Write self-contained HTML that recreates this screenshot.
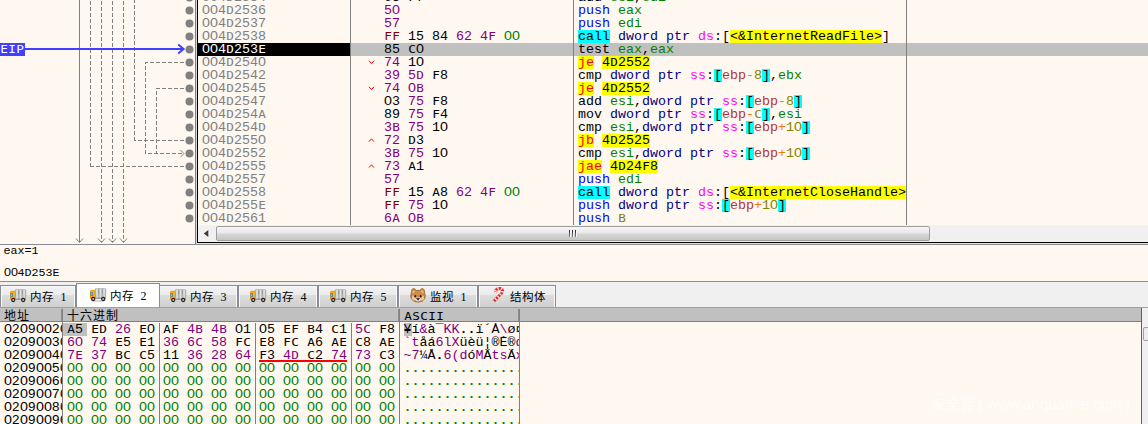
<!DOCTYPE html>
<html lang="zh-CN">
<head>
<meta charset="utf-8">
<title>x32dbg</title>
<style>
html,body{margin:0;padding:0;}
body{width:1148px;height:424px;overflow:hidden;background:#FFF8F0;position:relative;
 font-family:"Liberation Mono","Noto Sans CJK SC",monospace;font-size:13.333px;line-height:13px;color:#000;}
div,span,svg{position:absolute;box-sizing:border-box;}
.t span{position:static;}
.t{white-space:pre;height:13px;line-height:13px;overflow:hidden;}
.ad{left:198px;width:152px;padding-left:4px;color:#808080;}
.by{left:384px;width:189px;}
.in{left:574px;width:332px;padding-left:4px;}
.z{font-family:"Liberation Sans",sans-serif;font-style:normal;display:inline-block;width:8px;text-align:center;font-size:13px;line-height:0;text-indent:0;transform:scaleX(1.1);}
.z.y{width:7px;font-size:11.400px;}
.c{font-family:"DejaVu Sans Mono","Liberation Mono",monospace;font-style:normal;display:inline-block;width:8px;text-align:center;font-size:11px;line-height:0;text-indent:0;transform:scaleX(1.15);}
.k{color:#000}.p{color:#800080}.g{color:#008000}.r{color:#800000}
.b{color:#0000FF}.rg{color:#008300}.sz{color:#000080}.sg{color:#FF00FF}
.cy{background:#00FFFF;color:#000}.ye{background:#FFFF00;color:#000}.jr{background:#FFFF00;color:#FF0000}
.mb{color:#B03434}.op{color:#F27711}.vl{color:#828200}
.vln{width:1px;background:#808080;}
.hln{height:1px;}
.tabbg{border:1px solid #898C95;border-bottom:none;background:linear-gradient(#F2F2F2,#EBEBEB 45%,#DDDDDD 45%,#CFCFCF);box-shadow:inset 1px 1px 0 #FAFAFA,inset -1px 0 0 #FAFAFA;}
.tabtx{font-family:"Liberation Sans","Noto Sans CJK SC",sans-serif;font-size:11.500px;letter-spacing:0.500px;line-height:16px;height:16px;white-space:pre;color:#000;}
.tabtx i{position:static;font-style:normal;font-family:"Liberation Serif",serif;font-size:12px;word-spacing:3px;}
.hd{top:310px;height:13px;line-height:13px;white-space:pre;}
.hd.cj{top:309px;height:14px;line-height:16px;font-size:12px;letter-spacing:1px;}
.dr{white-space:pre;height:13px;line-height:13px;overflow:hidden;}
.dr span,.dr b{position:static;}
.sl{background:#C0C0C0;}
</style>
</head>
<body>

<svg style="left:0;top:0" width="196" height="245" viewBox="0 0 196 245" shape-rendering="crispEdges">
<g stroke="#808080" stroke-width="1" fill="none">
<path d="M79.5 0V242"/>
<g stroke-dasharray="4 2">
<path d="M90.5 166.5V0"/>
<path d="M184 166.5H90.5"/>
<path d="M101.5 1V242"/>
<path d="M112.5 1V242"/>
<path d="M123.5 1V242"/>
<path d="M134.5 140.5V0"/>
<path d="M184 140.5H134.5"/>
<path d="M184 62.5H145.5V153.5H183"/>
<path d="M184 88.5H156.5V153.5"/>
</g>
</g>
<g stroke="#808080" stroke-width="1" fill="none" shape-rendering="geometricPrecision">
<path d="M76.0 238.5L79.5 242.5L83.0 238.5"/>
<path d="M98.0 238.5L101.5 242.5L105.0 238.5"/>
<path d="M109.0 238.5L112.5 242.5L116.0 238.5"/>
<path d="M120.0 238.5L123.5 242.5L127.0 238.5"/>
<path d="M180.5 150.0L184 153.5L180.5 157.0"/>
</g>
<g fill="#808080" shape-rendering="geometricPrecision">
<circle cx="189.5" cy="-2.5" r="4"/>
<circle cx="189.5" cy="10.5" r="4"/>
<circle cx="189.5" cy="23.5" r="4"/>
<circle cx="189.5" cy="36.5" r="4"/>
<circle cx="189.5" cy="49.5" r="4"/>
<circle cx="189.5" cy="62.5" r="4"/>
<circle cx="189.5" cy="75.5" r="4"/>
<circle cx="189.5" cy="88.5" r="4"/>
<circle cx="189.5" cy="101.5" r="4"/>
<circle cx="189.5" cy="114.5" r="4"/>
<circle cx="189.5" cy="127.5" r="4"/>
<circle cx="189.5" cy="140.5" r="4"/>
<circle cx="189.5" cy="153.5" r="4"/>
<circle cx="189.5" cy="166.5" r="4"/>
<circle cx="189.5" cy="179.5" r="4"/>
<circle cx="189.5" cy="192.5" r="4"/>
<circle cx="189.5" cy="205.5" r="4"/>
<circle cx="189.5" cy="218.5" r="4"/>
</g>
<rect x="0" y="43" width="25" height="13" fill="#4040FF"/>
<rect x="25" y="48" width="158" height="2" fill="#4040FF"/>
<path d="M178.2 44.5L183.6 49.0L178.2 53.5" stroke="#4040FF" stroke-width="2" fill="none" shape-rendering="geometricPrecision"/>
</svg>
<div class="t" style="left:0;top:43px;color:#fff"><i class="c">E</i><i class="c">I</i><i class="c">P</i></div>
<div class="vln" style="left:195px;top:0;height:245px"></div>
<div class="vln" style="left:196px;top:0;height:244px;background:#D8D8D8"></div>
<div class="vln" style="left:197px;top:0;height:243px;background:#000"></div>
<div style="left:198px;top:43px;width:152px;height:13px;background:#000"></div>
<div style="left:351px;top:43px;width:797px;height:13px;background:#C0C0C0"></div>
<div class="t ad" style="top:-9px"><i class="z">0</i><i class="z">0</i>4<i class="c">D</i>2534</div>
<div class="t by" style="top:-9px"><span class="k"><i class="z">0</i>3</span> <span class="k"><i class="c">F</i>7</span></div>
<div class="t in" style="top:-9px"><span class="k">add</span> <span class="rg">esi</span><span class="k">,</span><span class="rg">edi</span></div>
<div class="t ad" style="top:4px"><i class="z">0</i><i class="z">0</i>4<i class="c">D</i>2536</div>
<div class="t by" style="top:4px"><span class="p">5<i class="z">0</i></span></div>
<div class="t in" style="top:4px"><span class="b">push</span> <span class="rg">eax</span></div>
<div class="t ad" style="top:17px"><i class="z">0</i><i class="z">0</i>4<i class="c">D</i>2537</div>
<div class="t by" style="top:17px"><span class="p">57</span></div>
<div class="t in" style="top:17px"><span class="b">push</span> <span class="rg">edi</span></div>
<div class="t ad" style="top:30px"><i class="z">0</i><i class="z">0</i>4<i class="c">D</i>2538</div>
<div class="t by" style="top:30px"><span class="r"><i class="c">F</i><i class="c">F</i></span> <span class="k">15</span> <span class="k">84</span> <span class="p">62</span> <span class="p">4<i class="c">F</i></span> <span class="g"><i class="z">0</i><i class="z">0</i></span></div>
<div class="t in" style="top:30px"><span class="cy">call</span> <span class="sz">dword ptr</span> <span class="sg">ds</span><span class="k">:[</span><span class="ye">&lt;&amp;InternetReadFile&gt;</span><span class="k">]</span></div>
<div class="t ad" style="top:43px;color:#fff"><i class="z">0</i><i class="z">0</i>4<i class="c">D</i>253<i class="c">E</i></div>
<div class="t by" style="top:43px"><span class="k">85</span> <span class="k"><i class="c">C</i><i class="z">0</i></span></div>
<div class="t in" style="top:43px"><span class="k">test</span> <span class="rg">eax</span><span class="k">,</span><span class="rg">eax</span></div>
<div class="t ad" style="top:56px"><i class="z">0</i><i class="z">0</i>4<i class="c">D</i>254<i class="z">0</i></div>
<div class="t by" style="top:56px"><span class="p">74</span> <span class="k">1<i class="z">0</i></span></div>
<svg style="left:0;top:0" width="400" height="226"><path d="M369 60.8L371.5 63.6L374 60.8" stroke="#FF0000" stroke-width="1" fill="none"/></svg>
<div class="t in" style="top:56px"><span class="jr">je</span> <span class="ye">4<i class="c">D</i>2552</span></div>
<div class="t ad" style="top:69px"><i class="z">0</i><i class="z">0</i>4<i class="c">D</i>2542</div>
<div class="t by" style="top:69px"><span class="p">39</span> <span class="p">5<i class="c">D</i></span> <span class="k"><i class="c">F</i>8</span></div>
<div class="t in" style="top:69px"><span class="k">cmp</span> <span class="sz">dword ptr</span> <span class="sg">ss</span><span class="k">:</span><span class="cy">[</span><span class="mb">ebp</span><span class="op">-</span><span class="vl">8</span><span class="cy">]</span><span class="k">,</span><span class="rg">ebx</span></div>
<div class="t ad" style="top:82px"><i class="z">0</i><i class="z">0</i>4<i class="c">D</i>2545</div>
<div class="t by" style="top:82px"><span class="p">74</span> <span class="p"><i class="z">0</i><i class="c">B</i></span></div>
<svg style="left:0;top:0" width="400" height="226"><path d="M369 86.8L371.5 89.6L374 86.8" stroke="#FF0000" stroke-width="1" fill="none"/></svg>
<div class="t in" style="top:82px"><span class="jr">je</span> <span class="ye">4<i class="c">D</i>2552</span></div>
<div class="t ad" style="top:95px"><i class="z">0</i><i class="z">0</i>4<i class="c">D</i>2547</div>
<div class="t by" style="top:95px"><span class="k"><i class="z">0</i>3</span> <span class="p">75</span> <span class="k"><i class="c">F</i>8</span></div>
<div class="t in" style="top:95px"><span class="k">add</span> <span class="rg">esi</span><span class="k">,</span><span class="sz">dword ptr</span> <span class="sg">ss</span><span class="k">:</span><span class="cy">[</span><span class="mb">ebp</span><span class="op">-</span><span class="vl">8</span><span class="cy">]</span></div>
<div class="t ad" style="top:108px"><i class="z">0</i><i class="z">0</i>4<i class="c">D</i>254<i class="c">A</i></div>
<div class="t by" style="top:108px"><span class="k">89</span> <span class="p">75</span> <span class="k"><i class="c">F</i>4</span></div>
<div class="t in" style="top:108px"><span class="k">mov</span> <span class="sz">dword ptr</span> <span class="sg">ss</span><span class="k">:</span><span class="cy">[</span><span class="mb">ebp</span><span class="op">-</span><span class="vl"><i class="c">C</i></span><span class="cy">]</span><span class="k">,</span><span class="rg">esi</span></div>
<div class="t ad" style="top:121px"><i class="z">0</i><i class="z">0</i>4<i class="c">D</i>254<i class="c">D</i></div>
<div class="t by" style="top:121px"><span class="p">3<i class="c">B</i></span> <span class="p">75</span> <span class="k">1<i class="z">0</i></span></div>
<div class="t in" style="top:121px"><span class="k">cmp</span> <span class="rg">esi</span><span class="k">,</span><span class="sz">dword ptr</span> <span class="sg">ss</span><span class="k">:</span><span class="cy">[</span><span class="mb">ebp</span><span class="op">+</span><span class="vl">1<i class="z">0</i></span><span class="cy">]</span></div>
<div class="t ad" style="top:134px"><i class="z">0</i><i class="z">0</i>4<i class="c">D</i>255<i class="z">0</i></div>
<div class="t by" style="top:134px"><span class="p">72</span> <span class="k"><i class="c">D</i>3</span></div>
<svg style="left:0;top:0" width="400" height="226"><path d="M369 141.6L371.5 138.8L374 141.6" stroke="#FF0000" stroke-width="1" fill="none"/></svg>
<div class="t in" style="top:134px"><span class="jr">jb</span> <span class="ye">4<i class="c">D</i>2525</span></div>
<div class="t ad" style="top:147px"><i class="z">0</i><i class="z">0</i>4<i class="c">D</i>2552</div>
<div class="t by" style="top:147px"><span class="p">3<i class="c">B</i></span> <span class="p">75</span> <span class="k">1<i class="z">0</i></span></div>
<div class="t in" style="top:147px"><span class="k">cmp</span> <span class="rg">esi</span><span class="k">,</span><span class="sz">dword ptr</span> <span class="sg">ss</span><span class="k">:</span><span class="cy">[</span><span class="mb">ebp</span><span class="op">+</span><span class="vl">1<i class="z">0</i></span><span class="cy">]</span></div>
<div class="t ad" style="top:160px"><i class="z">0</i><i class="z">0</i>4<i class="c">D</i>2555</div>
<div class="t by" style="top:160px"><span class="p">73</span> <span class="k"><i class="c">A</i>1</span></div>
<svg style="left:0;top:0" width="400" height="226"><path d="M369 167.6L371.5 164.8L374 167.6" stroke="#FF0000" stroke-width="1" fill="none"/></svg>
<div class="t in" style="top:160px"><span class="jr">jae</span> <span class="ye">4<i class="c">D</i>24<i class="c">F</i>8</span></div>
<div class="t ad" style="top:173px"><i class="z">0</i><i class="z">0</i>4<i class="c">D</i>2557</div>
<div class="t by" style="top:173px"><span class="p">57</span></div>
<div class="t in" style="top:173px"><span class="b">push</span> <span class="rg">edi</span></div>
<div class="t ad" style="top:186px"><i class="z">0</i><i class="z">0</i>4<i class="c">D</i>2558</div>
<div class="t by" style="top:186px"><span class="r"><i class="c">F</i><i class="c">F</i></span> <span class="k">15</span> <span class="k"><i class="c">A</i>8</span> <span class="p">62</span> <span class="p">4<i class="c">F</i></span> <span class="g"><i class="z">0</i><i class="z">0</i></span></div>
<div class="t in" style="top:186px"><span class="cy">call</span> <span class="sz">dword ptr</span> <span class="sg">ds</span><span class="k">:[</span><span class="ye">&lt;&amp;InternetCloseHandle&gt;</span><span class="k">]</span></div>
<div class="t ad" style="top:199px"><i class="z">0</i><i class="z">0</i>4<i class="c">D</i>255<i class="c">E</i></div>
<div class="t by" style="top:199px"><span class="r"><i class="c">F</i><i class="c">F</i></span> <span class="p">75</span> <span class="k">1<i class="z">0</i></span></div>
<div class="t in" style="top:199px"><span class="b">push</span> <span class="sz">dword ptr</span> <span class="sg">ss</span><span class="k">:</span><span class="cy">[</span><span class="mb">ebp</span><span class="op">+</span><span class="vl">1<i class="z">0</i></span><span class="cy">]</span></div>
<div class="t ad" style="top:212px"><i class="z">0</i><i class="z">0</i>4<i class="c">D</i>2561</div>
<div class="t by" style="top:212px"><span class="p">6<i class="c">A</i></span> <span class="p"><i class="z">0</i><i class="c">B</i></span></div>
<div class="t in" style="top:212px"><span class="b">push</span> <span class="vl"><i class="c">B</i></span></div>
<div class="vln" style="left:350px;top:0;height:225px"></div>
<div class="vln" style="left:573px;top:0;height:225px"></div>
<div class="vln" style="left:906px;top:0;height:225px"></div>
<div style="left:198px;top:225px;width:950px;height:17px;background:#F0F0F0"></div>
<div style="left:198px;top:225px;width:950px;height:1px;background:#F6F2EE"></div>
<svg style="left:198px;top:226px" width="18" height="16"><path d="M5.800 7.500L10.300 4V11Z" fill="#3A3A3A"/></svg>
<div style="left:216px;top:226px;width:714px;height:15px;border:1px solid #9E9E9E;border-radius:2px;background:linear-gradient(#F6F6F6,#E9E9E9 45%,#D6D6D6 55%,#C6C6C6)"></div>
<div style="left:569px;top:230px;width:1px;height:7px;background:linear-gradient(#222,#888)"></div>
<div style="left:570px;top:230px;width:1px;height:7px;background:#F4F4F4"></div>
<div style="left:572px;top:230px;width:1px;height:7px;background:linear-gradient(#222,#888)"></div>
<div style="left:573px;top:230px;width:1px;height:7px;background:#F4F4F4"></div>
<div style="left:575px;top:230px;width:1px;height:7px;background:linear-gradient(#222,#888)"></div>
<div style="left:576px;top:230px;width:1px;height:7px;background:#F4F4F4"></div>
<div class="hln" style="left:197px;top:242px;width:951px;background:#000"></div>
<div class="hln" style="left:196px;top:243px;width:952px;background:#E0E0E0"></div>
<div class="hln" style="left:0;top:244px;width:1148px;background:#8C8C94"></div>
<div class="t" style="left:3.500px;top:246px;height:11px;line-height:11px;font-size:11.67px">eax=1</div>
<div class="t" style="left:3.500px;top:268px;height:11px;line-height:11px;font-size:11.67px"><i class="z y">0</i><i class="z y">0</i>4D253E</div>
<div class="hln" style="left:0;top:281px;width:1148px;background:#A0A0A0"></div>
<svg style="left:0;top:0" width="0" height="0"><defs><linearGradient id="tk" x1="0" y1="0" x2="0.333" y2="0" spreadMethod="repeat"><stop offset="0" stop-color="#8E8E8E"/><stop offset="0.450" stop-color="#ECECEC"/><stop offset="0.650" stop-color="#DCDCDC"/><stop offset="1" stop-color="#8E8E8E"/></linearGradient></defs></svg>
<div style="left:0;top:282px;width:1148px;height:26px;background:#F0F0F0"></div>
<div class="hln" style="left:0;top:281px;width:1148px;background:#898C95"></div>
<div class="tabbg" style="left:0px;top:285px;width:76px;height:22px"></div>
<div class="tabbg" style="left:158px;top:285px;width:80px;height:22px"></div>
<div class="tabbg" style="left:238px;top:285px;width:80px;height:22px"></div>
<div class="tabbg" style="left:318px;top:285px;width:80px;height:22px"></div>
<div class="tabbg" style="left:398px;top:285px;width:80px;height:22px"></div>
<div class="tabbg" style="left:478px;top:285px;width:78px;height:22px"></div>
<div style="left:76px;top:283px;width:84px;height:24px;background:#fff;border:1px solid #898C95;border-bottom:none"></div>
<div class="hln" style="left:0;top:307px;width:1148px;background:#A0A0A0"></div>
<svg style="left:10px;top:289px" width="17" height="15" viewBox="0 0 17 15"><ellipse cx="8.500" cy="12.700" rx="7.500" ry="1" fill="#D2D2D2"/><rect x="5.200" y="0.400" width="10.600" height="10" rx="1.300" fill="url(#tk)" stroke="#B4B4B4" stroke-width="0.800"/><rect x="5.600" y="5.500" width="6.600" height="4.500" fill="#C8D0E8" opacity="0.350"/><rect x="12.200" y="5.500" width="3.200" height="4.500" fill="#B4D8BC" opacity="0.450"/><rect x="5.200" y="9.700" width="10.600" height="1" fill="#8C8C8C"/><rect x="0.500" y="2.400" width="4.700" height="8.400" rx="0.800" fill="#F7B512" stroke="#E59C06"/><rect x="0.500" y="4" width="2.400" height="4" fill="#4C82C4"/><rect x="1.300" y="4.700" width="0.800" height="2.400" fill="#9CC0EC"/><circle cx="3.200" cy="11" r="1.600" fill="#C4C0BC" stroke="#2A1414" stroke-width="1.100"/><circle cx="13.200" cy="11" r="1.600" fill="#C4C0BC" stroke="#2A1414" stroke-width="1.100"/></svg>
<div class="tabtx" style="left:30px;top:289px">内存<i> 1</i></div>
<svg style="left:90px;top:288px" width="17" height="15" viewBox="0 0 17 15"><ellipse cx="8.500" cy="12.700" rx="7.500" ry="1" fill="#D2D2D2"/><rect x="5.200" y="0.400" width="10.600" height="10" rx="1.300" fill="url(#tk)" stroke="#B4B4B4" stroke-width="0.800"/><rect x="5.600" y="5.500" width="6.600" height="4.500" fill="#C8D0E8" opacity="0.350"/><rect x="12.200" y="5.500" width="3.200" height="4.500" fill="#B4D8BC" opacity="0.450"/><rect x="5.200" y="9.700" width="10.600" height="1" fill="#8C8C8C"/><rect x="0.500" y="2.400" width="4.700" height="8.400" rx="0.800" fill="#F7B512" stroke="#E59C06"/><rect x="0.500" y="4" width="2.400" height="4" fill="#4C82C4"/><rect x="1.300" y="4.700" width="0.800" height="2.400" fill="#9CC0EC"/><circle cx="3.200" cy="11" r="1.600" fill="#C4C0BC" stroke="#2A1414" stroke-width="1.100"/><circle cx="13.200" cy="11" r="1.600" fill="#C4C0BC" stroke="#2A1414" stroke-width="1.100"/></svg>
<div class="tabtx" style="left:110px;top:288px">内存<i> 2</i></div>
<svg style="left:170px;top:289px" width="17" height="15" viewBox="0 0 17 15"><ellipse cx="8.500" cy="12.700" rx="7.500" ry="1" fill="#D2D2D2"/><rect x="5.200" y="0.400" width="10.600" height="10" rx="1.300" fill="url(#tk)" stroke="#B4B4B4" stroke-width="0.800"/><rect x="5.600" y="5.500" width="6.600" height="4.500" fill="#C8D0E8" opacity="0.350"/><rect x="12.200" y="5.500" width="3.200" height="4.500" fill="#B4D8BC" opacity="0.450"/><rect x="5.200" y="9.700" width="10.600" height="1" fill="#8C8C8C"/><rect x="0.500" y="2.400" width="4.700" height="8.400" rx="0.800" fill="#F7B512" stroke="#E59C06"/><rect x="0.500" y="4" width="2.400" height="4" fill="#4C82C4"/><rect x="1.300" y="4.700" width="0.800" height="2.400" fill="#9CC0EC"/><circle cx="3.200" cy="11" r="1.600" fill="#C4C0BC" stroke="#2A1414" stroke-width="1.100"/><circle cx="13.200" cy="11" r="1.600" fill="#C4C0BC" stroke="#2A1414" stroke-width="1.100"/></svg>
<div class="tabtx" style="left:190px;top:289px">内存<i> 3</i></div>
<svg style="left:250px;top:289px" width="17" height="15" viewBox="0 0 17 15"><ellipse cx="8.500" cy="12.700" rx="7.500" ry="1" fill="#D2D2D2"/><rect x="5.200" y="0.400" width="10.600" height="10" rx="1.300" fill="url(#tk)" stroke="#B4B4B4" stroke-width="0.800"/><rect x="5.600" y="5.500" width="6.600" height="4.500" fill="#C8D0E8" opacity="0.350"/><rect x="12.200" y="5.500" width="3.200" height="4.500" fill="#B4D8BC" opacity="0.450"/><rect x="5.200" y="9.700" width="10.600" height="1" fill="#8C8C8C"/><rect x="0.500" y="2.400" width="4.700" height="8.400" rx="0.800" fill="#F7B512" stroke="#E59C06"/><rect x="0.500" y="4" width="2.400" height="4" fill="#4C82C4"/><rect x="1.300" y="4.700" width="0.800" height="2.400" fill="#9CC0EC"/><circle cx="3.200" cy="11" r="1.600" fill="#C4C0BC" stroke="#2A1414" stroke-width="1.100"/><circle cx="13.200" cy="11" r="1.600" fill="#C4C0BC" stroke="#2A1414" stroke-width="1.100"/></svg>
<div class="tabtx" style="left:270px;top:289px">内存<i> 4</i></div>
<svg style="left:330px;top:289px" width="17" height="15" viewBox="0 0 17 15"><ellipse cx="8.500" cy="12.700" rx="7.500" ry="1" fill="#D2D2D2"/><rect x="5.200" y="0.400" width="10.600" height="10" rx="1.300" fill="url(#tk)" stroke="#B4B4B4" stroke-width="0.800"/><rect x="5.600" y="5.500" width="6.600" height="4.500" fill="#C8D0E8" opacity="0.350"/><rect x="12.200" y="5.500" width="3.200" height="4.500" fill="#B4D8BC" opacity="0.450"/><rect x="5.200" y="9.700" width="10.600" height="1" fill="#8C8C8C"/><rect x="0.500" y="2.400" width="4.700" height="8.400" rx="0.800" fill="#F7B512" stroke="#E59C06"/><rect x="0.500" y="4" width="2.400" height="4" fill="#4C82C4"/><rect x="1.300" y="4.700" width="0.800" height="2.400" fill="#9CC0EC"/><circle cx="3.200" cy="11" r="1.600" fill="#C4C0BC" stroke="#2A1414" stroke-width="1.100"/><circle cx="13.200" cy="11" r="1.600" fill="#C4C0BC" stroke="#2A1414" stroke-width="1.100"/></svg>
<div class="tabtx" style="left:350px;top:289px">内存<i> 5</i></div>
<svg style="left:410px;top:287.7px" width="17" height="15" viewBox="0 0 17 15"><ellipse cx="8" cy="13.600" rx="6" ry="1" fill="#D0D0D0"/><path d="M1.300 5.500C1.200 2.500 2.300 0.400 3.800 0.600C5 0.800 5.800 1.800 6.300 2.600C7.400 2.300 8.600 2.300 9.700 2.600C10.200 1.800 11 0.800 12.200 0.600C13.700 0.400 14.800 2.500 14.700 5.500C15.600 7.500 15.400 10.200 13.600 12C12 13.500 10 14 8 14C6 14 4 13.500 2.400 12C0.600 10.200 0.400 7.500 1.300 5.500Z" fill="#CE8C46" stroke="#9C6428" stroke-width="0.900"/><path d="M3.300 2.200C4.200 2.200 4.800 3 5.200 3.800L2.600 5.500C2.500 4 2.700 2.700 3.300 2.200ZM12.700 2.200C11.800 2.200 11.200 3 10.800 3.800L13.400 5.500C13.500 4 13.300 2.700 12.700 2.200Z" fill="#EDBE84"/><ellipse cx="4.500" cy="10" rx="2.600" ry="2.400" fill="#EAC894"/><ellipse cx="11.500" cy="10" rx="2.600" ry="2.400" fill="#EAC894"/><ellipse cx="8" cy="11.300" rx="2.600" ry="2.200" fill="#F6E2C4"/><ellipse cx="5.300" cy="8.300" rx="1" ry="1.200" fill="#24161A"/><ellipse cx="10.700" cy="8.300" rx="1" ry="1.200" fill="#24161A"/><path d="M6.400 10.200H9.600L8 12.300Z" fill="#2A1820" stroke="#2A1820" stroke-width="0.600" stroke-linejoin="round"/></svg>
<div class="tabtx" style="left:430px;top:289px">监视<i> 1</i></div>
<svg style="left:492px;top:287px" width="17" height="15" viewBox="0 0 17 15"><ellipse cx="3.500" cy="14" rx="3" ry="0.800" fill="#D0D0D0"/><path d="M2 14.200L9.200 6.600C11.700 3.800 10.400 1.500 7.700 1.500C5.400 1.500 3.700 2.900 3.500 5" fill="none" stroke="#C9A0A0" stroke-width="3.400" stroke-linecap="round"/><path d="M2 14.200L9.200 6.600C11.700 3.800 10.400 1.500 7.700 1.500C5.400 1.500 3.700 2.900 3.500 5" fill="none" stroke="#FFF0F0" stroke-width="2.800" stroke-linecap="round"/><path d="M2 14.200L9.200 6.600C11.700 3.800 10.400 1.500 7.700 1.500C5.400 1.500 3.700 2.900 3.500 5" fill="none" stroke="#E4262C" stroke-width="2.800" stroke-dasharray="2.100 1.200"/></svg>
<div class="tabtx" style="left:510px;top:289px">结构体</div>
<div style="left:0;top:308px;width:1141px;height:14px;background:#C0C0C0"></div>
<div class="hln" style="left:0;top:321px;width:1141px;background:#808080"></div>
<div class="hd cj" style="left:4px">地址</div>
<div class="hd cj" style="left:67px">十六进制</div>
<div class="hd" style="left:404px"><i class="c">A</i><i class="c">S</i><i class="c">C</i><i class="c">I</i><i class="c">I</i></div>
<div class="vln" style="left:62px;top:309px;height:115px"></div>
<div class="vln" style="left:61px;top:309px;height:12px;background:#8C8C8C"></div>
<div class="vln" style="left:399px;top:309px;height:115px"></div>
<div class="vln" style="left:398px;top:309px;height:12px;background:#8C8C8C"></div>
<div class="vln" style="left:519px;top:309px;height:115px"></div>
<div class="vln" style="left:518px;top:309px;height:12px;background:#8C8C8C"></div>
<div class="vln" style="left:1141px;top:308px;height:116px;background:#606060"></div>
<div style="left:1142px;top:308px;width:6px;height:116px;background:#F0F0F0"></div>
<div style="left:1143px;top:327px;width:8px;height:14px;border:1px solid #A0A0A0;border-radius:2px;background:#EDEDED"></div>
<div style="left:63px;top:323px;width:24px;height:13px;background:#C0C0C0"></div>
<div class="dr" style="left:0;top:323px;width:62px;padding-left:3.700px"><i class="z">0</i>2<i class="z">0</i>9<i class="z">0</i><i class="z">0</i>2<i class="z">0</i></div>
<div class="dr" style="left:63px;top:323px;width:336px;text-indent:-4px"><span class="k"> <i class="c">A</i>5</span><span class="k"> <i class="c">E</i><i class="c">D</i></span><span class="p"> 26</span><span class="k"> <i class="c">E</i><i class="z">0</i></span><span class="k"> <i class="c">A</i><i class="c">F</i></span><span class="p"> 4<i class="c">B</i></span><span class="p"> 4<i class="c">B</i></span><span class="k"> <i class="z">0</i>1</span><span class="k"> <i class="z">0</i>5</span><span class="k"> <i class="c">E</i><i class="c">F</i></span><span class="k"> <i class="c">B</i>4</span><span class="k"> <i class="c">C</i>1</span><span class="p"> 5<i class="c">C</i></span><span class="k"> <i class="c">F</i>8</span></div>
<div class="dr" style="left:400px;top:323px;width:119px;padding-left:3.500px"><span class="sl k">¥</span><span class="k">í</span><span class="p">&amp;</span><span class="k">à</span><span class="k">¯</span><span class="p">K</span><span class="p">K</span><b class="k">.</b><b class="k">.</b><span class="k">ï</span><span class="k">´</span><span class="k">Á</span><span class="p">\</span><span class="k">ø</span><span class="k">¤</span><span class="p">;</span></div>
<div class="dr" style="left:0;top:336px;width:62px;padding-left:3.700px"><i class="z">0</i>2<i class="z">0</i>9<i class="z">0</i><i class="z">0</i>3<i class="z">0</i></div>
<div class="dr" style="left:63px;top:336px;width:336px;text-indent:-4px"><span class="p"> 6<i class="z">0</i></span><span class="p"> 74</span><span class="k"> <i class="c">E</i>5</span><span class="k"> <i class="c">E</i>1</span><span class="p"> 36</span><span class="p"> 6<i class="c">C</i></span><span class="p"> 58</span><span class="k"> <i class="c">F</i><i class="c">C</i></span><span class="k"> <i class="c">E</i>8</span><span class="k"> <i class="c">F</i><i class="c">C</i></span><span class="k"> <i class="c">A</i>6</span><span class="k"> <i class="c">A</i><i class="c">E</i></span><span class="k"> <i class="c">C</i>8</span><span class="k"> <i class="c">A</i><i class="c">E</i></span></div>
<div class="dr" style="left:400px;top:336px;width:119px;padding-left:3.500px"><span class="p">`</span><span class="p">t</span><span class="k">å</span><span class="k">á</span><span class="p">6</span><span class="p">l</span><span class="p">X</span><span class="k">ü</span><span class="k">è</span><span class="k">ü</span><span class="k">¦</span><span class="k">®</span><span class="k">È</span><span class="k">®</span><span class="p">d</span><span class="p">1</span></div>
<div class="dr" style="left:0;top:349px;width:62px;padding-left:3.700px"><i class="z">0</i>2<i class="z">0</i>9<i class="z">0</i><i class="z">0</i>4<i class="z">0</i></div>
<div class="dr" style="left:63px;top:349px;width:336px;text-indent:-4px"><span class="p"> 7<i class="c">E</i></span><span class="p"> 37</span><span class="k"> <i class="c">B</i><i class="c">C</i></span><span class="k"> <i class="c">C</i>5</span><span class="k"> 11</span><span class="p"> 36</span><span class="p"> 28</span><span class="p"> 64</span><span class="k"> <i class="c">F</i>3</span><span class="p"> 4<i class="c">D</i></span><span class="k"> <i class="c">C</i>2</span><span class="p"> 74</span><span class="p"> 73</span><span class="k"> <i class="c">C</i>3</span></div>
<div class="dr" style="left:400px;top:349px;width:119px;padding-left:3.500px"><span class="p">~</span><span class="p">7</span><span class="k">¼</span><span class="k">Å</span><b class="k">.</b><span class="p">6</span><span class="p">(</span><span class="p">d</span><span class="k">ó</span><span class="p">M</span><span class="k">Â</span><span class="p">t</span><span class="p">s</span><span class="k">Ã</span><span class="p">x</span><b class="k">.</b></div>
<div class="dr" style="left:0;top:362px;width:62px;padding-left:3.700px"><i class="z">0</i>2<i class="z">0</i>9<i class="z">0</i><i class="z">0</i>5<i class="z">0</i></div>
<div class="dr" style="left:63px;top:362px;width:336px;text-indent:-4px"><span class="g"> <i class="z">0</i><i class="z">0</i></span><span class="g"> <i class="z">0</i><i class="z">0</i></span><span class="g"> <i class="z">0</i><i class="z">0</i></span><span class="g"> <i class="z">0</i><i class="z">0</i></span><span class="g"> <i class="z">0</i><i class="z">0</i></span><span class="g"> <i class="z">0</i><i class="z">0</i></span><span class="g"> <i class="z">0</i><i class="z">0</i></span><span class="g"> <i class="z">0</i><i class="z">0</i></span><span class="g"> <i class="z">0</i><i class="z">0</i></span><span class="g"> <i class="z">0</i><i class="z">0</i></span><span class="g"> <i class="z">0</i><i class="z">0</i></span><span class="g"> <i class="z">0</i><i class="z">0</i></span><span class="g"> <i class="z">0</i><i class="z">0</i></span><span class="g"> <i class="z">0</i><i class="z">0</i></span></div>
<div class="dr" style="left:400px;top:362px;width:119px;padding-left:3.500px"><b class="g">.</b><b class="g">.</b><b class="g">.</b><b class="g">.</b><b class="g">.</b><b class="g">.</b><b class="g">.</b><b class="g">.</b><b class="g">.</b><b class="g">.</b><b class="g">.</b><b class="g">.</b><b class="g">.</b><b class="g">.</b><b class="g">.</b><b class="g">.</b></div>
<div class="dr" style="left:0;top:375px;width:62px;padding-left:3.700px"><i class="z">0</i>2<i class="z">0</i>9<i class="z">0</i><i class="z">0</i>6<i class="z">0</i></div>
<div class="dr" style="left:63px;top:375px;width:336px;text-indent:-4px"><span class="g"> <i class="z">0</i><i class="z">0</i></span><span class="g"> <i class="z">0</i><i class="z">0</i></span><span class="g"> <i class="z">0</i><i class="z">0</i></span><span class="g"> <i class="z">0</i><i class="z">0</i></span><span class="g"> <i class="z">0</i><i class="z">0</i></span><span class="g"> <i class="z">0</i><i class="z">0</i></span><span class="g"> <i class="z">0</i><i class="z">0</i></span><span class="g"> <i class="z">0</i><i class="z">0</i></span><span class="g"> <i class="z">0</i><i class="z">0</i></span><span class="g"> <i class="z">0</i><i class="z">0</i></span><span class="g"> <i class="z">0</i><i class="z">0</i></span><span class="g"> <i class="z">0</i><i class="z">0</i></span><span class="g"> <i class="z">0</i><i class="z">0</i></span><span class="g"> <i class="z">0</i><i class="z">0</i></span></div>
<div class="dr" style="left:400px;top:375px;width:119px;padding-left:3.500px"><b class="g">.</b><b class="g">.</b><b class="g">.</b><b class="g">.</b><b class="g">.</b><b class="g">.</b><b class="g">.</b><b class="g">.</b><b class="g">.</b><b class="g">.</b><b class="g">.</b><b class="g">.</b><b class="g">.</b><b class="g">.</b><b class="g">.</b><b class="g">.</b></div>
<div class="dr" style="left:0;top:388px;width:62px;padding-left:3.700px"><i class="z">0</i>2<i class="z">0</i>9<i class="z">0</i><i class="z">0</i>7<i class="z">0</i></div>
<div class="dr" style="left:63px;top:388px;width:336px;text-indent:-4px"><span class="g"> <i class="z">0</i><i class="z">0</i></span><span class="g"> <i class="z">0</i><i class="z">0</i></span><span class="g"> <i class="z">0</i><i class="z">0</i></span><span class="g"> <i class="z">0</i><i class="z">0</i></span><span class="g"> <i class="z">0</i><i class="z">0</i></span><span class="g"> <i class="z">0</i><i class="z">0</i></span><span class="g"> <i class="z">0</i><i class="z">0</i></span><span class="g"> <i class="z">0</i><i class="z">0</i></span><span class="g"> <i class="z">0</i><i class="z">0</i></span><span class="g"> <i class="z">0</i><i class="z">0</i></span><span class="g"> <i class="z">0</i><i class="z">0</i></span><span class="g"> <i class="z">0</i><i class="z">0</i></span><span class="g"> <i class="z">0</i><i class="z">0</i></span><span class="g"> <i class="z">0</i><i class="z">0</i></span></div>
<div class="dr" style="left:400px;top:388px;width:119px;padding-left:3.500px"><b class="g">.</b><b class="g">.</b><b class="g">.</b><b class="g">.</b><b class="g">.</b><b class="g">.</b><b class="g">.</b><b class="g">.</b><b class="g">.</b><b class="g">.</b><b class="g">.</b><b class="g">.</b><b class="g">.</b><b class="g">.</b><b class="g">.</b><b class="g">.</b></div>
<div class="dr" style="left:0;top:401px;width:62px;padding-left:3.700px"><i class="z">0</i>2<i class="z">0</i>9<i class="z">0</i><i class="z">0</i>8<i class="z">0</i></div>
<div class="dr" style="left:63px;top:401px;width:336px;text-indent:-4px"><span class="g"> <i class="z">0</i><i class="z">0</i></span><span class="g"> <i class="z">0</i><i class="z">0</i></span><span class="g"> <i class="z">0</i><i class="z">0</i></span><span class="g"> <i class="z">0</i><i class="z">0</i></span><span class="g"> <i class="z">0</i><i class="z">0</i></span><span class="g"> <i class="z">0</i><i class="z">0</i></span><span class="g"> <i class="z">0</i><i class="z">0</i></span><span class="g"> <i class="z">0</i><i class="z">0</i></span><span class="g"> <i class="z">0</i><i class="z">0</i></span><span class="g"> <i class="z">0</i><i class="z">0</i></span><span class="g"> <i class="z">0</i><i class="z">0</i></span><span class="g"> <i class="z">0</i><i class="z">0</i></span><span class="g"> <i class="z">0</i><i class="z">0</i></span><span class="g"> <i class="z">0</i><i class="z">0</i></span></div>
<div class="dr" style="left:400px;top:401px;width:119px;padding-left:3.500px"><b class="g">.</b><b class="g">.</b><b class="g">.</b><b class="g">.</b><b class="g">.</b><b class="g">.</b><b class="g">.</b><b class="g">.</b><b class="g">.</b><b class="g">.</b><b class="g">.</b><b class="g">.</b><b class="g">.</b><b class="g">.</b><b class="g">.</b><b class="g">.</b></div>
<div class="dr" style="left:0;top:414px;width:62px;padding-left:3.700px"><i class="z">0</i>2<i class="z">0</i>9<i class="z">0</i><i class="z">0</i>9<i class="z">0</i></div>
<div class="dr" style="left:63px;top:414px;width:336px;text-indent:-4px"><span class="g"> <i class="z">0</i><i class="z">0</i></span><span class="g"> <i class="z">0</i><i class="z">0</i></span><span class="g"> <i class="z">0</i><i class="z">0</i></span><span class="g"> <i class="z">0</i><i class="z">0</i></span><span class="g"> <i class="z">0</i><i class="z">0</i></span><span class="g"> <i class="z">0</i><i class="z">0</i></span><span class="g"> <i class="z">0</i><i class="z">0</i></span><span class="g"> <i class="z">0</i><i class="z">0</i></span><span class="g"> <i class="z">0</i><i class="z">0</i></span><span class="g"> <i class="z">0</i><i class="z">0</i></span><span class="g"> <i class="z">0</i><i class="z">0</i></span><span class="g"> <i class="z">0</i><i class="z">0</i></span><span class="g"> <i class="z">0</i><i class="z">0</i></span><span class="g"> <i class="z">0</i><i class="z">0</i></span></div>
<div class="dr" style="left:400px;top:414px;width:119px;padding-left:3.500px"><b class="g">.</b><b class="g">.</b><b class="g">.</b><b class="g">.</b><b class="g">.</b><b class="g">.</b><b class="g">.</b><b class="g">.</b><b class="g">.</b><b class="g">.</b><b class="g">.</b><b class="g">.</b><b class="g">.</b><b class="g">.</b><b class="g">.</b><b class="g">.</b></div>
<div class="vln" style="left:159px;top:323px;height:101px"></div>
<div class="vln" style="left:255px;top:323px;height:101px"></div>
<div class="vln" style="left:351px;top:323px;height:101px"></div>
<div style="left:259px;top:360px;width:88px;height:2px;background:#FF0000"></div>
<div style="left:932px;top:394px;width:214px;height:20px;line-height:20px;white-space:pre;font-family:'Liberation Sans','Noto Sans CJK SC',sans-serif;font-size:15px;color:rgba(255,255,255,0.800)"><span style="position:static;font-size:14px">安全客</span> ( www.anquanke.com )</div>
</body>
</html>
